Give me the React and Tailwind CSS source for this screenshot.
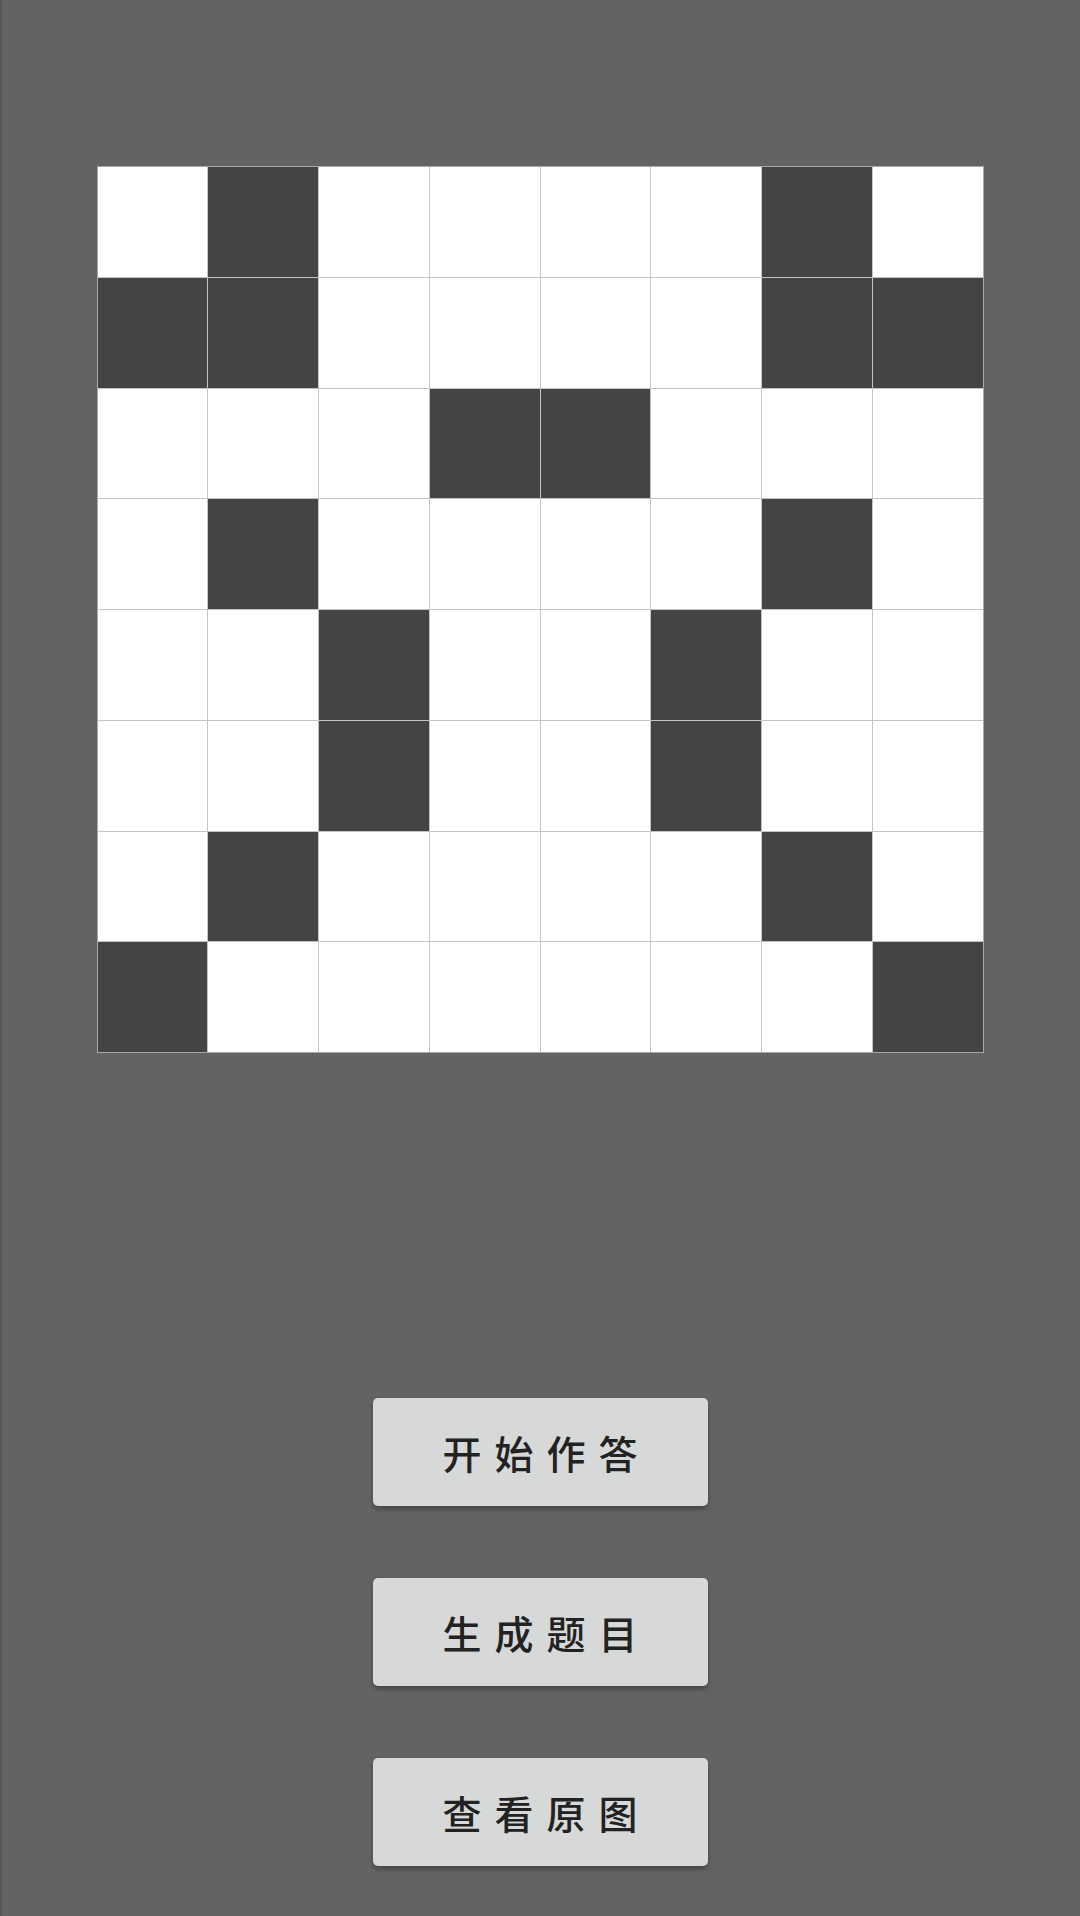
const board = [
  [0, 1, 0, 0, 0, 0, 1, 0],
  [1, 1, 0, 0, 0, 0, 1, 1],
  [0, 0, 0, 1, 1, 0, 0, 0],
  [0, 1, 0, 0, 0, 0, 1, 0],
  [0, 0, 1, 0, 0, 1, 0, 0],
  [0, 0, 1, 0, 0, 1, 0, 0],
  [0, 1, 0, 0, 0, 0, 1, 0],
  [1, 0, 0, 0, 0, 0, 0, 1],
];

const buttons = ["开始作答", "生成题目", "查看原图"];

export default function App() {
  return (
    <div
      className="w-[1080px] h-[1916px] bg-[#636363] border-l-2 border-[#565656] flex flex-col items-center"
      style={{ fontFamily: '"Noto Sans CJK SC", "Noto Sans", sans-serif' }}
    >
      {/* 棋盘 */}
      <div className="mt-[166px] -ml-[2px] w-[887px] h-[887px] grid grid-cols-8 grid-rows-8 gap-px bg-[#c4c4c4] border border-[#a8a8a8]">
        {board.flat().map((v, i) => (
          <div key={i} className={v ? "bg-[#444444]" : "bg-white"} />
        ))}
      </div>

      {/* 按钮 */}
      <div className="mt-[345px] -ml-[2px] flex flex-col gap-[72px]">
        {buttons.map((t) => (
          <button
            key={t}
            className="w-[335px] h-[108px] rounded-[5px] bg-[#d7d9d9] text-[#222] text-[39px] font-medium tracking-[13px] pl-[13px] shadow-[0_3px_5px_rgba(0,0,0,0.3)] flex items-center justify-center"
          >
            {t}
          </button>
        ))}
      </div>
    </div>
  );
}
